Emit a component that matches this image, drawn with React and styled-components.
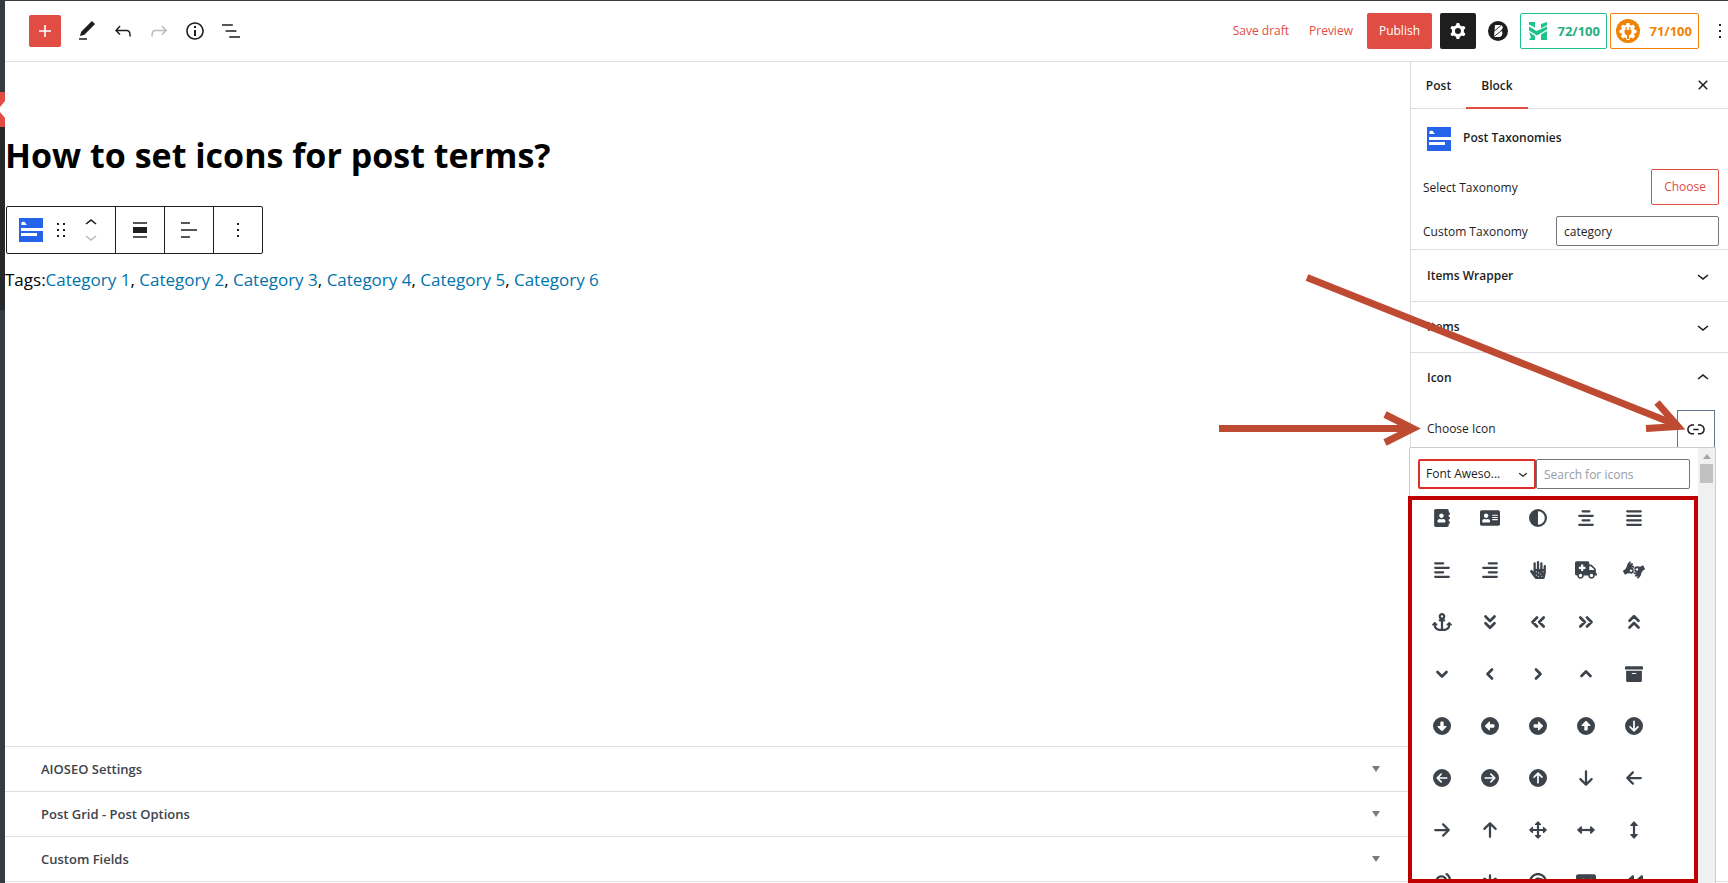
import React from "react";
import styled, { createGlobalStyle } from "styled-components";
import {
  FaAddressBook, FaAddressCard, FaAllergies, FaAmbulance,
  FaAmericanSignLanguageInterpreting, FaArchive,
} from "react-icons/fa";
import {
  FaCircleHalfStroke, FaAlignCenter, FaAlignJustify, FaAlignLeft, FaAlignRight, FaAnchor,
  FaCircleDown, FaCircleLeft, FaCircleRight, FaCircleUp, FaCircleArrowDown,
  FaCircleArrowLeft, FaCircleArrowRight, FaCircleArrowUp, FaArrowDown, FaArrowLeft,
  FaArrowRight, FaArrowUp, FaEarListen, FaAsterisk, FaAt, FaRectangleAd, FaBackward,
} from "react-icons/fa6";

const c = {
  ink: "#1e1e1e",
  accent: "#e14d43",
  line: "#dddddd",
  menu: "#363b3f",
  menuDark: "#26292c",
  blue: "#2563eb",
  link: "#0073aa",
  mark: "#be4a31",
};

const GlobalStyle = createGlobalStyle`
  *, *::before, *::after { box-sizing: border-box; }
  body { margin: 0; background: #fff; }
  body, button, input, select {
    font-family: "Open Sans", "Noto Sans", sans-serif;
    font-size: 12px;
    line-height: 16px;
    color: ${c.ink};
  }
  button { cursor: pointer; }
`;

const Shell = styled.div`
  position: relative;
  display: flex;
  height: 100vh;
  overflow: hidden;
  border-top: 1px solid ${c.menu};
`;

const AdminMenu = styled.nav`
  display: flex;
  flex-direction: column;
  width: 5px;
  flex: none;
  background: ${c.menu};
`;

const MenuCurrent = styled.div`
  margin-top: 91px;
  height: 35px;
  background: ${c.accent};
  display: flex;
  align-items: center;
`;

const MenuSub = styled.div`
  height: 183px;
  background: ${c.menuDark};
`;

const Editor = styled.div`
  flex: 1;
  min-width: 0;
  display: flex;
  flex-direction: column;
`;

const Header = styled.header`
  height: 61px;
  flex: none;
  display: flex;
  align-items: center;
  justify-content: space-between;
  padding-left: 24px;
  border-bottom: 1px solid ${c.line};
`;

const Tools = styled.div`
  display: flex;
  align-items: center;
  gap: ${(p) => p.$gap || 0}px;
`;

const IconButton = styled.button`
  display: inline-flex;
  align-items: center;
  justify-content: center;
  flex: none;
  width: ${(p) => p.$w || 36}px;
  height: ${(p) => p.$h || 36}px;
  padding: 0;
  border: 0;
  border-radius: 2px;
  background: ${(p) => p.$bg || "transparent"};
  color: ${(p) => p.$color || c.ink};
  svg { flex: none; }
`;

const TextButton = styled.button`
  height: 36px;
  padding: 0 ${(p) => (p.$kind ? 12 : 10)}px;
  border: ${(p) => (p.$kind === "outline" ? `1px solid ${c.accent}` : "0")};
  border-radius: 2px;
  background: ${(p) => (p.$kind === "solid" ? c.accent : "transparent")};
  color: ${(p) => (p.$kind === "solid" ? "#fff" : c.accent)};
  white-space: nowrap;
`;

const Score = styled.button`
  display: flex;
  align-items: center;
  justify-content: space-between;
  width: ${(p) => p.$w}px;
  height: 36px;
  padding: 0 6px 0 ${(p) => p.$left}px;
  border: 1px solid ${(p) => p.$color};
  border-radius: 2px;
  background: #fff;
  color: ${(p) => p.$text};
  font-size: 13px;
  font-weight: 700;
`;

const Actions = styled.div`
  display: flex;
  align-items: center;
  margin-right: -10px;
`;

const Spacer = styled.span`
  width: ${(p) => p.$w}px;
`;

const Body = styled.div`
  flex: 1;
  min-height: 0;
  display: flex;
  margin-bottom: 1px;
  border-bottom: 1px solid ${c.line};
`;

const Main = styled.main`
  flex: 1;
  min-width: 0;
  display: flex;
  flex-direction: column;
`;

const Canvas = styled.section`
  flex: 1;
  padding-top: 70px;
`;

const Title = styled.h1`
  margin: 0;
  font-size: 34px;
  line-height: 46px;
  font-weight: 700;
  color: #000;
`;

const BlockToolbar = styled.div`
  display: inline-flex;
  height: 48px;
  margin: 28px 0 0 1px;
  border: 1px solid ${c.ink};
  border-radius: 2px;
`;

const ToolGroup = styled.div`
  display: flex;
  align-items: center;
  justify-content: center;
  width: ${(p) => p.$w}px;
  & + & { border-left: 1px solid ${c.ink}; }
`;

const Movers = styled.div`
  display: flex;
  flex-direction: column;
  gap: 2px;
`;

const Tags = styled.p`
  margin: 12px 0 0;
  font-size: 17px;
  line-height: 28px;
  color: #000;
`;

const TagLink = styled.a`
  color: ${c.link};
  text-decoration: none;
`;

const MetaRow = styled.button`
  flex: none;
  display: flex;
  align-items: center;
  justify-content: space-between;
  height: 45px;
  padding: 0 30px 0 36px;
  border: 0;
  border-top: 1px solid ${c.line};
  background: #fff;
  color: #3c434a;
  font-size: 13px;
  font-weight: 600;
`;

const Sidebar = styled.aside`
  width: 318px;
  flex: none;
  border-left: 1px solid ${c.line};
`;

const Tabs = styled.div`
  display: flex;
  align-items: stretch;
  height: 47px;
  border-bottom: 1px solid ${c.line};
`;

const Tab = styled.button`
  width: ${(p) => p.$w}px;
  padding: 2px 0 0;
  margin-bottom: -1px;
  border: 0;
  border-bottom: 2px solid ${(p) => (p.$active ? c.accent : "transparent")};
  background: transparent;
  font-weight: 600;
`;

const TabClose = styled.div`
  margin-left: auto;
  padding: 5px 7px;
`;

const BlockCard = styled.div`
  display: flex;
  gap: 12px;
  height: 60px;
  padding: 18px 16px 0;
`;

const CardTitle = styled.h2`
  margin: 0;
  font-size: 12px;
  line-height: 22px;
  font-weight: 600;
`;

const Field = styled.div`
  display: flex;
  align-items: center;
  justify-content: space-between;
  height: 36px;
  margin-bottom: 8px;
  padding: 0 9px 0 12px;
  & + & { margin-bottom: 0; }
`;

const FieldLabel = styled.label`
  padding-top: 2px;
`;

const TextInput = styled.input`
  width: ${(p) => p.$w}px;
  height: 30px;
  padding: 0 7px;
  border: 1px solid #757575;
  border-radius: 2px;
  background: #fff;
  font-size: 12px;
  &::placeholder { color: #949ba5; opacity: 1; }
`;

const PanelToggle = styled.button`
  display: flex;
  align-items: center;
  justify-content: space-between;
  width: 100%;
  height: ${(p) => p.$h}px;
  padding: 0 13px 0 16px;
  border: 0;
  border-top: 1px solid ${c.line};
  background: #fff;
  font-weight: 600;
`;

const ChooseRow = styled.div`
  display: flex;
  align-items: center;
  justify-content: space-between;
  height: 38px;
  margin-top: 7px;
  padding: 0 13px 0 16px;
`;

const LinkButton = styled(IconButton)`
  border: 1px solid #64748b;
  border-radius: 0;
`;

const Popover = styled.div`
  position: absolute;
  top: 446px;
  right: 12px;
  bottom: 0;
  width: 307px;
  display: flex;
  border: 1px solid #cccccc;
  border-bottom: 0;
  border-radius: 2px 2px 0 0;
  background: #fff;
`;

const Picker = styled.div`
  flex: 1;
  min-width: 0;
  display: flex;
  flex-direction: column;
`;

const SearchRow = styled.div`
  display: flex;
  padding: 11px 8px 7px;
`;

const SelectWrap = styled.div`
  display: grid;
  align-items: center;
  width: 118px;
  > * { grid-area: 1 / 1; }
  > svg { justify-self: end; margin-right: 4px; pointer-events: none; }
`;

const Select = styled.select`
  appearance: none;
  width: 100%;
  height: 30px;
  padding: 0 20px 0 6px;
  border: 2px solid #dc2f27;
  border-radius: 2px;
  background: #fff;
`;

const IconFrame = styled.div`
  flex: 1;
  min-height: 0;
  overflow: hidden;
  margin-left: -2px;
  border: 4px solid #c00000;
`;

const IconGrid = styled.div`
  display: grid;
  grid-template-columns: repeat(5, 48px);
  grid-auto-rows: 52px;
  margin: -8px 0 0 6px;
`;

const IconChoice = styled.button`
  display: flex;
  align-items: center;
  justify-content: center;
  padding: 0;
  border: 0;
  background: transparent;
  color: #3c434a;
  svg { width: ${(p) => p.$w}px; height: 18px; flex: none; }
`;

const ScrollTrack = styled.div`
  display: flex;
  flex-direction: column;
  align-items: center;
  gap: 5px;
  width: 17px;
  padding-top: 6px;
  background: #f0f0f0;
`;

const ScrollThumb = styled.div`
  width: 13px;
  height: 19px;
  background: #c1c1c1;
`;

const Annotations = styled.svg`
  position: absolute;
  top: 259px;
  right: 0;
  pointer-events: none;
`;

const paths = {
  plus: "M18 11.2h-5.2V6h-1.6v5.2H6v1.6h5.2V18h1.6v-5.2H18z",
  edit: "M20.1 5.1L16.9 2 6.2 12.7l-1.3 4.4 4.5-1.3L20.1 5.1zM4 20.8h8v-1.5H4v1.5z",
  undo: "M18.3 11.7c-.6-.6-1.4-.9-2.3-.9H6.7l2.9-3.3-1.1-1-4.5 5L8.5 16l1-1-2.7-2.7H16c.5 0 .9.2 1.3.5 1 1 1 3.4 1 4.5v.3h1.5v-.2c0-1.5 0-4.3-1.5-5.7z",
  redo: "M15.6 6.5l-1.1 1 2.9 3.3H8c-.9 0-1.7.3-2.3.9-1.4 1.5-1.4 4.2-1.4 5.6v.2h1.5v-.3c0-1.1 0-3.5 1-4.5.3-.3.7-.5 1.3-.5h9.2L14.5 15l1.1 1.1 4.6-4.6-4.6-5z",
  info: "M12 3.2c-4.8 0-8.8 3.9-8.8 8.8 0 4.8 3.9 8.8 8.8 8.8 4.8 0 8.8-3.9 8.8-8.8 0-4.8-4-8.8-8.8-8.8zm0 16c-4 0-7.2-3.3-7.2-7.2C4.8 8 8 4.8 12 4.8s7.2 3.3 7.2 7.2c0 4-3.2 7.2-7.2 7.2zM11 17h2v-6h-2v6zm0-8h2V7h-2v2z",
  list: "M13.8 5.2H3v1.5h10.8V5.2zm-3.6 12v1.5H21v-1.5H10.2zm7.2-6H6.6v1.5h10.8v-1.5z",
  more: "M13 19h-2v-2h2v2zm0-6h-2v-2h2v2zm0-6h-2V5h2v2z",
  drag: "M8 7h2V5H8v2zm0 6h2v-2H8v2zm0 6h2v-2H8v2zm6-14v2h2V5h-2zm0 8h2v-2h-2v2zm0 6h2v-2h-2v2z",
  up: "M6.5 12.4L12 8l5.5 4.4-.9 1.2L12 10l-4.5 3.6-1-1.2z",
  down: "M17.5 11.6L12 16l-5.5-4.4.9-1.2L12 14l4.5-3.6 1 1.2z",
  alignNone: "M5 15h14V9H5v6zm0 4.8h14v-1.5H5v1.5zM5 4.2v1.5h14V4.2H5z",
  alignLeft: "M4 19.8h8.9v-1.5H4v1.5zm8.9-15.6H4v1.5h8.9V4.2zm-8.9 7v1.5h16v-1.5H4z",
  cog: "M10.289 4.836A1 1 0 0111.275 4h1.306a1 1 0 01.987.836l.244 1.466c.787.26 1.503.679 2.108 1.218l1.393-.522a1 1 0 011.216.437l.653 1.13a1 1 0 01-.23 1.273l-1.148.944a6.025 6.025 0 010 2.435l1.149.946a1 1 0 01.23 1.272l-.653 1.13a1 1 0 01-1.216.437l-1.394-.522c-.605.54-1.32.958-2.108 1.218l-.244 1.466a1 1 0 01-.987.836h-1.306a1 1 0 01-.986-.836l-.244-1.466a5.995 5.995 0 01-2.108-1.218l-1.394.522a1 1 0 01-1.217-.436l-.653-1.131a1 1 0 01.23-1.272l1.149-.946a6.026 6.026 0 010-2.435l-1.148-.944a1 1 0 01-.23-1.272l.653-1.131a1 1 0 011.217-.437l1.393.522a5.994 5.994 0 012.108-1.218l.244-1.466zM14.929 12a3 3 0 11-6 0 3 3 0 016 0z",
  close: "M12 13.06l3.712 3.713 1.061-1.06L13.061 12l3.712-3.712-1.06-1.06L12 10.938 8.288 7.227l-1.061 1.06L10.939 12l-3.712 3.712 1.06 1.061L12 13.061z",
  link: "M15.6 7.2H14v1.5h1.6c2 0 3.7 1.7 3.7 3.7s-1.7 3.7-3.7 3.7H14v1.5h1.6c2.8 0 5.2-2.3 5.2-5.2 0-2.9-2.3-5.2-5.2-5.2zM4.7 12.4c0-2 1.7-3.7 3.7-3.7H10V7.2H8.4c-2.9 0-5.2 2.3-5.2 5.2 0 2.9 2.3 5.2 5.2 5.2H10v-1.5H8.4c-2 0-3.7-1.7-3.7-3.7zm4.6.9h5.3v-1.5H9.3v1.5z",
};

const Glyph = ({ name, size = 24, h = size, box = "0 0 24 24" }) => (
  <svg width={size} height={h} viewBox={box} fill="currentColor" fillRule="evenodd" aria-hidden="true">
    <path d={paths[name]} />
  </svg>
);

const TaxonomyLogo = () => (
  <svg width="24" height="24" viewBox="0 0 24 24" aria-hidden="true">
    <path fill={c.blue} d="M0 0h24v24H0z" />
    <path fill="#fff" d="M2.400 7V4.600l1.200-.8h1.800l.6.8 1.800 2.400zM2 10h22v3H2zM2 15h16v3H2z" />
  </svg>
);

const BoltLogo = () => (
  <svg width="20" height="20" viewBox="0 0 20 20" aria-hidden="true">
    <circle cx="10" cy="10" r="10" fill={c.ink} />
    <path fill="#fff" d="M7 4h4.800q3.200 0 2.900 2.700-.2 1.800-1.900 2.800 1.800.8 1.600 2.900-.3 3.600-4.300 3.600H6z" />
    <path stroke={c.ink} strokeWidth=".9" d="M5 11L13 4.500M6 15.500L14.500 8.800" />
  </svg>
);

const SeoLogo = () => (
  <svg width="18" height="18" viewBox="0 0 18 18" aria-hidden="true">
    <path fill="#1ec28b" d="M0 0h6v5.500L0 2.500zM12 2l6-2v3.200l-6 3zM0 4.500l7.500 4.500L18 4.500v3L8 13.500 0 8.500zM0 10l6 4v4H0l2-3zM18 9v9h-6v-5.500z" />
  </svg>
);

const PlugLogo = () => (
  <svg width="24" height="24" viewBox="0 0 24 24" aria-hidden="true">
    <circle cx="12" cy="12" r="12" fill="#f18200" />
    <path
      fill="#fff"
      d="M10.600 4h2.800l.5 1.900 1.500.6 1.700-1 2 2-1 1.700.6 1.500 1.900.5v2.600l-1.900.5-.6 1.500 1 1.700-2 2-1.700-1-1.500.6-.5 1.900h-2.800l-.5-1.900-1.500-.6-1.700 1-2-2 1-1.700-.6-1.500-1.900-.5v-2.600l1.900-.5.6-1.500-1-1.700 2-2 1.700 1 1.500-.6z"
    />
    <path fill="#f18200" d="M9.500 8h1.200v3h2.600V8h1.200v3h1v2.500q0 2-2.500 2.800V20h-2v-3.700q-2.500-.8-2.500-2.800V11h1z" />
  </svg>
);

const Caret = () => (
  <svg width="8" height="6" viewBox="0 0 8 6" aria-hidden="true">
    <path fill="#787c82" d="M0 0h8L4 6z" />
  </svg>
);

const strokeIcon = (d) => () => (
  <svg viewBox="0 0 18 18" fill="none" stroke="currentColor" strokeWidth="2.700" strokeLinecap="round" strokeLinejoin="round" aria-hidden="true">
    <path d={d} />
  </svg>
);

const headedIcon = (shaft, heads) => () => (
  <svg viewBox="0 0 18 18" fill="currentColor" stroke="currentColor" strokeLinejoin="round" aria-hidden="true">
    <path strokeWidth="2.200" d={shaft} />
    <path strokeWidth="1.200" d={heads} />
  </svg>
);

const AnglesDown = strokeIcon("M4.500 3.500L9 8l4.500-4.500M4.500 10.200L9 14.700l4.500-4.500");
const AnglesLeft = strokeIcon("M8 4.500L3.500 9 8 13.500M14.700 4.500L10.200 9l4.500 4.500");
const AnglesRight = strokeIcon("M10 4.500L14.500 9 10 13.500M3.300 4.500L7.800 9l-4.500 4.500");
const AnglesUp = strokeIcon("M4.500 14.500L9 10l4.500 4.500M4.500 7.800L9 3.300l4.500 4.500");
const AngleDown = strokeIcon("M4.500 7L9 11.500 13.500 7");
const AngleLeft = strokeIcon("M11 4.500L6.500 9l4.500 4.500");
const AngleRight = strokeIcon("M7 4.500L11.500 9 7 13.500");
const AngleUp = strokeIcon("M4.500 11L9 6.500l4.500 4.500");
const ArrowsAll = headedIcon("M3 9h12M9 3v12", "M3.500 6.500V11.500L.8 9zM14.500 6.500V11.500L17.200 9zM6.500 3.500H11.500L9 .8zM6.500 14.500H11.500L9 17.200z");
const ArrowsH = headedIcon("M4 9h10", "M4.300 5.800V12.200L.8 9zM13.700 5.800V12.200L17.200 9z");
const ArrowsV = headedIcon("M9 4v10", "M5.800 4.300H12.200L9 .8zM5.800 13.700H12.200L9 17.200z");

const categories = [1, 2, 3, 4, 5, 6];
const metaBoxes = ["AIOSEO Settings", "Post Grid - Post Options", "Custom Fields"];
const headerTools = [["edit", "Tools"], ["undo", "Undo"], ["redo", "Redo", "#bbbbbb"], ["info", "Details"], ["list", "List View"]];
const icons = [
  [FaAddressBook], [FaAddressCard, 20], [FaCircleHalfStroke], [FaAlignCenter], [FaAlignJustify],
  [FaAlignLeft], [FaAlignRight], [FaAllergies], [FaAmbulance, 22], [FaAmericanSignLanguageInterpreting, 22],
  [FaAnchor, 20], [AnglesDown], [AnglesLeft], [AnglesRight], [AnglesUp],
  [AngleDown], [AngleLeft], [AngleRight], [AngleUp], [FaArchive],
  [FaCircleDown], [FaCircleLeft], [FaCircleRight], [FaCircleUp], [FaCircleArrowDown],
  [FaCircleArrowLeft], [FaCircleArrowRight], [FaCircleArrowUp], [FaArrowDown], [FaArrowLeft],
  [FaArrowRight], [FaArrowUp], [ArrowsAll], [ArrowsH], [ArrowsV],
  [FaEarListen], [FaAsterisk], [FaAt], [FaRectangleAd, 20], [FaBackward],
];

export default function App() {
  return (
    <>
      <GlobalStyle />
      <Shell>
        <AdminMenu aria-label="Admin menu">
          <MenuCurrent>
            <svg width="5" height="17" viewBox="0 0 5 17" aria-hidden="true">
              <path fill="#fff" d="M5 0v17L0 11V6z" />
            </svg>
          </MenuCurrent>
          <MenuSub />
        </AdminMenu>
        <Editor>
          <Header>
            <Tools $gap={8}>
              <IconButton $w={32} $h={32} $bg={c.accent} $color="#fff" aria-label="Add block">
                <Glyph name="plus" />
              </IconButton>
              <Tools>
                {headerTools.map(([name, label, color]) => (
                  <IconButton key={name} $color={color} aria-label={label}>
                    <Glyph name={name} />
                  </IconButton>
                ))}
              </Tools>
            </Tools>
            <Actions>
              <TextButton>Save draft</TextButton>
              <TextButton>Preview</TextButton>
              <Spacer $w={4} />
              <TextButton $kind="solid">Publish</TextButton>
              <Spacer $w={8} />
              <IconButton $bg={c.ink} $color="#fff" aria-label="Settings">
                <Glyph name="cog" />
              </IconButton>
              <Spacer $w={4} />
              <IconButton aria-label="Blocks plugin"><BoltLogo /></IconButton>
              <Spacer $w={4} />
              <Score $w={87} $left={8} $color="#1ec28b" $text="#27ae7d">
                <SeoLogo />72/100
              </Score>
              <Spacer $w={3} />
              <Score $w={89} $left={5} $color="#f18200" $text="#f18200">
                <PlugLogo />71/100
              </Score>
              <Spacer $w={3} />
              <IconButton aria-label="Options"><Glyph name="more" /></IconButton>
            </Actions>
          </Header>
          <Body>
            <Main>
              <Canvas>
                <Title>How to set icons for post terms?</Title>
                <BlockToolbar role="toolbar">
                  <ToolGroup $w={108}>
                    <IconButton $w={24} aria-label="Post Taxonomies"><TaxonomyLogo /></IconButton>
                    <Spacer $w={6} />
                    <IconButton $w={24} aria-label="Drag"><Glyph name="drag" /></IconButton>
                    <Spacer $w={6} />
                    <Movers>
                      <IconButton $w={24} $h={14} aria-label="Move up">
                        <Glyph name="up" h={14} box="0 4 24 14" />
                      </IconButton>
                      <IconButton $w={24} $h={14} $color="#bbbbbb" aria-label="Move down">
                        <Glyph name="down" h={14} box="0 6 24 14" />
                      </IconButton>
                    </Movers>
                  </ToolGroup>
                  <ToolGroup $w={49}><IconButton aria-label="Align"><Glyph name="alignNone" /></IconButton></ToolGroup>
                  <ToolGroup $w={49}><IconButton aria-label="Align text"><Glyph name="alignLeft" /></IconButton></ToolGroup>
                  <ToolGroup $w={49}><IconButton aria-label="Block options"><Glyph name="more" /></IconButton></ToolGroup>
                </BlockToolbar>
                <Tags>
                  Tags:
                  {categories.map((n) => (
                    <React.Fragment key={n}>
                      {n > 1 && ", "}
                      <TagLink href="#">Category {n}</TagLink>
                    </React.Fragment>
                  ))}
                </Tags>
              </Canvas>
              {metaBoxes.map((name) => (
                <MetaRow key={name}>{name}<Caret /></MetaRow>
              ))}
            </Main>
            <Sidebar>
              <Tabs>
                <Tab $w={55}>Post</Tab>
                <Tab $w={62} $active>Block</Tab>
                <TabClose>
                  <IconButton aria-label="Close settings"><Glyph name="close" /></IconButton>
                </TabClose>
              </Tabs>
              <BlockCard>
                <TaxonomyLogo />
                <CardTitle>Post Taxonomies</CardTitle>
              </BlockCard>
              <Field>
                <FieldLabel htmlFor="choose">Select Taxonomy</FieldLabel>
                <TextButton id="choose" $kind="outline">Choose</TextButton>
              </Field>
              <Field>
                <FieldLabel htmlFor="taxonomy">Custom Taxonomy</FieldLabel>
                <TextInput id="taxonomy" $w={163} defaultValue="category" />
              </Field>
              <PanelToggle $h={52}>Items Wrapper<Glyph name="down" /></PanelToggle>
              <PanelToggle $h={51}>Items<Glyph name="down" /></PanelToggle>
              <PanelToggle $h={51}>Icon<Glyph name="up" /></PanelToggle>
              <ChooseRow>
                <span>Choose Icon</span>
                <LinkButton $w={38} $h={38} aria-label="Pick an icon"><Glyph name="link" /></LinkButton>
              </ChooseRow>
            </Sidebar>
          </Body>
        </Editor>
        <Popover>
          <Picker>
            <SearchRow>
              <SelectWrap>
                <Select aria-label="Icon library"><option>Font Aweso...</option></Select>
                <Glyph name="down" size={18} />
              </SelectWrap>
              <TextInput $w={154} placeholder="Search for icons" aria-label="Search for icons" />
            </SearchRow>
            <IconFrame>
              <IconGrid>
                {icons.map(([Icon, width = 18], i) => (
                  <IconChoice key={i} $w={width} aria-label={`Icon ${i + 1}`}><Icon /></IconChoice>
                ))}
              </IconGrid>
            </IconFrame>
          </Picker>
          <ScrollTrack>
            <svg width="8" height="5" viewBox="0 0 8 5" aria-hidden="true">
              <path fill="#a3a3a3" d="M0 5h8L4 0z" />
            </svg>
            <ScrollThumb />
          </ScrollTrack>
        </Popover>
        <Annotations width="528" height="200" viewBox="1200 260 528 200" aria-hidden="true">
          <g fill="none" stroke={c.mark} strokeWidth="7" strokeLinejoin="miter">
            <path d="M1219 428.500H1411" />
            <path d="M1385 414.500L1413 428.500L1385 442.500" />
            <path d="M1307 277.500L1678 425.500" />
            <path d="M1657 402.500L1678 426.500L1646 428.500" />
          </g>
        </Annotations>
      </Shell>
    </>
  );
}
